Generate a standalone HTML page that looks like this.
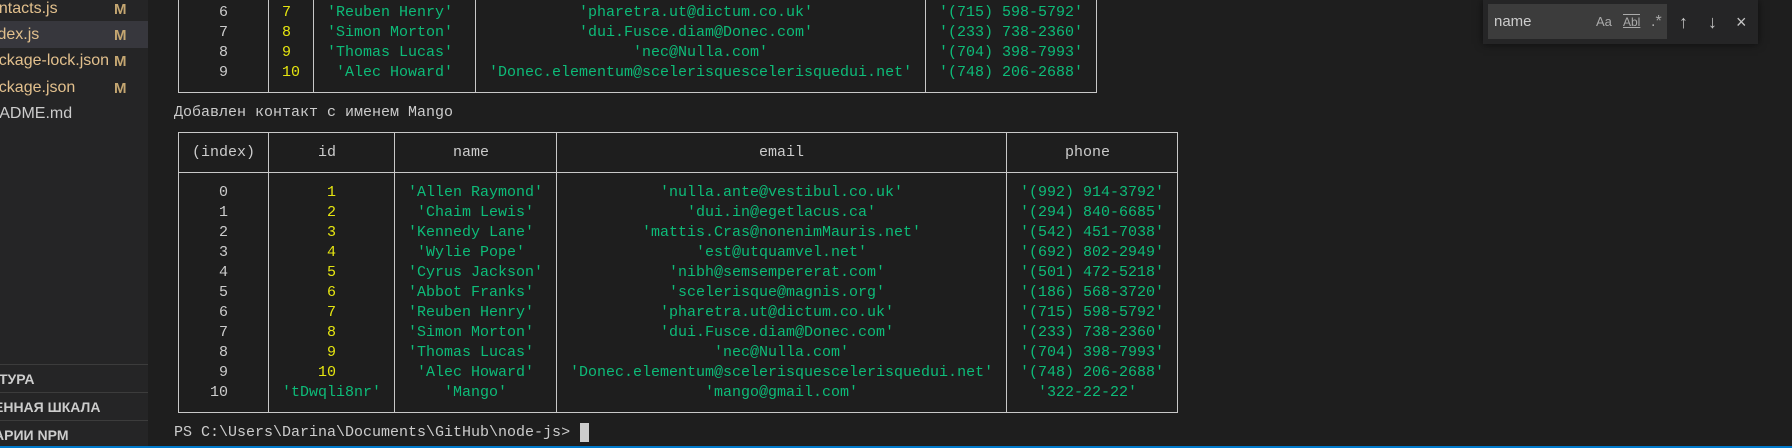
<!DOCTYPE html>
<html><head><meta charset="utf-8">
<style>
*{margin:0;padding:0;box-sizing:border-box}
html,body{width:1792px;height:448px;overflow:hidden;background:#1e1e1e}
#side{position:absolute;left:0;top:0;width:148px;height:448px;background:#252526;font-family:"Liberation Sans","DejaVu Sans",sans-serif;overflow:hidden}
.f{position:absolute;left:0;height:26px;line-height:26px;font-size:16px;color:#e2c08d;white-space:nowrap}
.m{position:absolute;left:114px;font-size:15px;font-weight:bold;color:#c4a671}
.hl{position:absolute;left:0;top:21px;width:148px;height:27px;background:#37373d}
.sec{position:absolute;left:0;width:148px;height:28px;line-height:28px;border-top:1px solid #3c3c3c;font-size:14px;font-weight:bold;color:#cccccc;white-space:nowrap}
.t{position:absolute;height:20px;line-height:20px;font-family:"Liberation Mono","DejaVu Sans Mono",monospace;font-size:15px;white-space:pre;color:#cccccc}
.y{color:#e5e510}.g{color:#0dbc79}
.v{position:absolute;width:1px;background:#c8c8c8}
.h{position:absolute;height:1px;background:#c8c8c8}
#find{position:absolute;left:1483px;top:0;width:275px;height:44px;background:#252526;box-shadow:0 0 8px rgba(0,0,0,.6)}
#inp{position:absolute;left:5px;top:4px;width:179px;height:35px;background:#3c3c3c;color:#cccccc;font-family:"Liberation Sans",sans-serif;font-size:15px;line-height:35px;padding-left:6px}
.ic{position:absolute;top:0;height:44px;line-height:44px;color:#c5c5c5;font-family:"Liberation Sans",sans-serif;font-size:14px}
</style></head><body>
<div id="side">
<div class="hl"></div>
<div class="f" style="top:-4px;left:-18px">contacts.js</div><div class="m" style="top:1px">M</div>
<div class="f" style="top:22px;left:-15px">index.js</div><div class="m" style="top:27px">M</div>
<div class="f" style="top:48px;left:-19px">package-lock.json</div><div class="m" style="top:53px">M</div>
<div class="f" style="top:75px;left:-19px">package.json</div><div class="m" style="top:80px">M</div>
<div class="f" style="top:101px;left:-23px;color:#cccccc">README.md</div>
<div class="sec" style="top:364px;left:-1px;width:160px">ТУРА</div>
<div class="sec" style="top:392px;left:-6px;width:160px">ЕННАЯ ШКАЛА</div>
<div class="sec" style="top:420px;left:-6px;width:160px">АРИИ NPM</div>
</div>

<div class="v" style="left:178px;top:0;height:93px"></div>
<div class="v" style="left:268px;top:0;height:93px"></div>
<div class="v" style="left:313px;top:0;height:93px"></div>
<div class="v" style="left:475px;top:0;height:93px"></div>
<div class="v" style="left:925px;top:0;height:93px"></div>
<div class="v" style="left:1096px;top:0;height:93px"></div>
<div class="h" style="left:178px;top:92px;width:919px"></div>

<div class="t" style="left:219px;top:2.7px">6</div><div class="t y" style="left:282px;top:2.7px">7</div><div class="t g" style="left:327px;top:2.7px">'Reuben Henry'</div><div class="t g" style="left:579px;top:2.7px">'pharetra.ut@dictum.co.uk'</div><div class="t g" style="left:939px;top:2.7px">'(715) 598-5792'</div>
<div class="t" style="left:219px;top:22.7px">7</div><div class="t y" style="left:282px;top:22.7px">8</div><div class="t g" style="left:327px;top:22.7px">'Simon Morton'</div><div class="t g" style="left:579px;top:22.7px">'dui.Fusce.diam@Donec.com'</div><div class="t g" style="left:939px;top:22.7px">'(233) 738-2360'</div>
<div class="t" style="left:219px;top:42.7px">8</div><div class="t y" style="left:282px;top:42.7px">9</div><div class="t g" style="left:327px;top:42.7px">'Thomas Lucas'</div><div class="t g" style="left:633px;top:42.7px">'nec@Nulla.com'</div><div class="t g" style="left:939px;top:42.7px">'(704) 398-7993'</div>
<div class="t" style="left:219px;top:62.7px">9</div><div class="t y" style="left:282px;top:62.7px">10</div><div class="t g" style="left:336px;top:62.7px">'Alec Howard'</div><div class="t g" style="left:489px;top:62.7px">'Donec.elementum@scelerisquescelerisquedui.net'</div><div class="t g" style="left:939px;top:62.7px">'(748) 206-2688'</div>

<div class="t" style="left:174px;top:102.7px">Добавлен контакт с именем Mango</div>

<div class="v" style="left:178px;top:132px;height:281px"></div>
<div class="v" style="left:268px;top:132px;height:281px"></div>
<div class="v" style="left:394px;top:132px;height:281px"></div>
<div class="v" style="left:556px;top:132px;height:281px"></div>
<div class="v" style="left:1006px;top:132px;height:281px"></div>
<div class="v" style="left:1177px;top:132px;height:281px"></div>
<div class="h" style="left:178px;top:132px;width:1000px"></div>
<div class="h" style="left:178px;top:172px;width:1000px"></div>
<div class="h" style="left:178px;top:412px;width:1000px"></div>

<div class="t" style="left:192px;top:142.7px">(index)</div><div class="t" style="left:318px;top:142.7px">id</div><div class="t" style="left:453px;top:142.7px">name</div><div class="t" style="left:759px;top:142.7px">email</div><div class="t" style="left:1065px;top:142.7px">phone</div>

<div class="t" style="left:219px;top:182.7px">0</div><div class="t y" style="left:327px;top:182.7px">1</div><div class="t g" style="left:408px;top:182.7px">'Allen Raymond'</div><div class="t g" style="left:660px;top:182.7px">'nulla.ante@vestibul.co.uk'</div><div class="t g" style="left:1020px;top:182.7px">'(992) 914-3792'</div>
<div class="t" style="left:219px;top:202.7px">1</div><div class="t y" style="left:327px;top:202.7px">2</div><div class="t g" style="left:417px;top:202.7px">'Chaim Lewis'</div><div class="t g" style="left:687px;top:202.7px">'dui.in@egetlacus.ca'</div><div class="t g" style="left:1020px;top:202.7px">'(294) 840-6685'</div>
<div class="t" style="left:219px;top:222.7px">2</div><div class="t y" style="left:327px;top:222.7px">3</div><div class="t g" style="left:408px;top:222.7px">'Kennedy Lane'</div><div class="t g" style="left:642px;top:222.7px">'mattis.Cras@nonenimMauris.net'</div><div class="t g" style="left:1020px;top:222.7px">'(542) 451-7038'</div>
<div class="t" style="left:219px;top:242.7px">3</div><div class="t y" style="left:327px;top:242.7px">4</div><div class="t g" style="left:417px;top:242.7px">'Wylie Pope'</div><div class="t g" style="left:696px;top:242.7px">'est@utquamvel.net'</div><div class="t g" style="left:1020px;top:242.7px">'(692) 802-2949'</div>
<div class="t" style="left:219px;top:262.7px">4</div><div class="t y" style="left:327px;top:262.7px">5</div><div class="t g" style="left:408px;top:262.7px">'Cyrus Jackson'</div><div class="t g" style="left:669px;top:262.7px">'nibh@semsempererat.com'</div><div class="t g" style="left:1020px;top:262.7px">'(501) 472-5218'</div>
<div class="t" style="left:219px;top:282.7px">5</div><div class="t y" style="left:327px;top:282.7px">6</div><div class="t g" style="left:408px;top:282.7px">'Abbot Franks'</div><div class="t g" style="left:669px;top:282.7px">'scelerisque@magnis.org'</div><div class="t g" style="left:1020px;top:282.7px">'(186) 568-3720'</div>
<div class="t" style="left:219px;top:302.7px">6</div><div class="t y" style="left:327px;top:302.7px">7</div><div class="t g" style="left:408px;top:302.7px">'Reuben Henry'</div><div class="t g" style="left:660px;top:302.7px">'pharetra.ut@dictum.co.uk'</div><div class="t g" style="left:1020px;top:302.7px">'(715) 598-5792'</div>
<div class="t" style="left:219px;top:322.7px">7</div><div class="t y" style="left:327px;top:322.7px">8</div><div class="t g" style="left:408px;top:322.7px">'Simon Morton'</div><div class="t g" style="left:660px;top:322.7px">'dui.Fusce.diam@Donec.com'</div><div class="t g" style="left:1020px;top:322.7px">'(233) 738-2360'</div>
<div class="t" style="left:219px;top:342.7px">8</div><div class="t y" style="left:327px;top:342.7px">9</div><div class="t g" style="left:408px;top:342.7px">'Thomas Lucas'</div><div class="t g" style="left:714px;top:342.7px">'nec@Nulla.com'</div><div class="t g" style="left:1020px;top:342.7px">'(704) 398-7993'</div>
<div class="t" style="left:219px;top:362.7px">9</div><div class="t y" style="left:318px;top:362.7px">10</div><div class="t g" style="left:417px;top:362.7px">'Alec Howard'</div><div class="t g" style="left:570px;top:362.7px">'Donec.elementum@scelerisquescelerisquedui.net'</div><div class="t g" style="left:1020px;top:362.7px">'(748) 206-2688'</div>
<div class="t" style="left:210px;top:382.7px">10</div><div class="t g" style="left:282px;top:382.7px">'tDwqli8nr'</div><div class="t g" style="left:444px;top:382.7px">'Mango'</div><div class="t g" style="left:705px;top:382.7px">'mango@gmail.com'</div><div class="t g" style="left:1038px;top:382.7px">'322-22-22'</div>

<div class="t" style="left:174px;top:422.7px">PS C:\Users\Darina\Documents\GitHub\node-js&gt;</div>
<div style="position:absolute;left:580px;top:423px;width:9px;height:19px;background:#cccccc"></div>

<div id="find">
<div id="inp">name</div>
<div class="ic" style="left:113px;font-size:13px;color:#aaa">Aa</div>
<div class="ic" style="left:140px;font-size:12px;color:#aaa;text-decoration:underline;text-decoration-thickness:1px"><span style="border-top:1px solid #aaa;line-height:12px">Abl</span></div>
<div class="ic" style="left:168px;font-size:16px;color:#aaa">.*</div>
<div class="ic" style="left:196px;font-size:18px">↑</div>
<div class="ic" style="left:225px;font-size:18px">↓</div>
<div class="ic" style="left:253px;font-size:18px">×</div>
</div>

<div style="position:absolute;left:0;top:446px;width:1792px;height:2px;background:#007acc"></div>
</body></html>
